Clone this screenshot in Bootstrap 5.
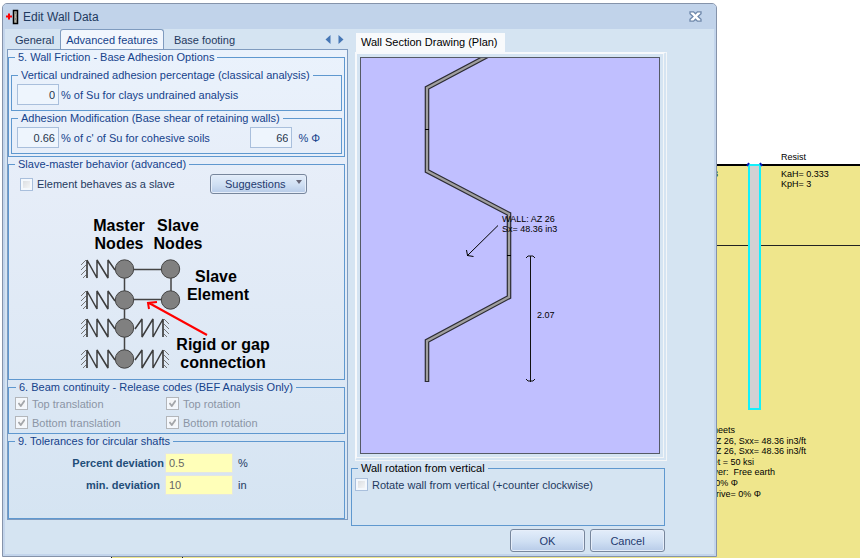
<!DOCTYPE html>
<html lang="en">
<head>
<meta charset="utf-8">
<meta name="viewport" content="width=device-width, initial-scale=1">
<title>Edit Wall Data</title>
<link href="https://cdn.jsdelivr.net/npm/bootstrap@5.3.0/dist/css/bootstrap.min.css" rel="stylesheet">
<style>
body{font:11px/14px "Liberation Sans",Arial,sans-serif;color:#1f3a5f;background:#fff}
.workspace{min-height:100vh;padding:3px 143px 1px 2px}
.model-view{position:absolute;inset:0;width:100%;height:100%;z-index:0}
.model-view text,.section-plan text{font-size:9px;fill:#000}
.dialog-window{z-index:1;border:1px solid #8593aa;border-radius:5px 5px 0 0;background:#d5e4f2;box-shadow:inset 0 0 0 2px #c3d5ec}
.title-bar{height:25px;padding:0 14px 0 3px;background:#c1d3ea;font-size:12px;border-radius:4px 4px 0 0}
.close-btn{width:13px;height:13px;line-height:0}
.dialog-main{padding:0 4px 3px}
.left-pane{flex:0 0 341px}
.tab-strip{height:20px}
.tab-strip .nav{padding-left:2px}
.tab-strip .nav-link{padding:3px 5px 2px;color:#1f3a5f;border:1px solid transparent;border-bottom:0;border-radius:3px 3px 0 0;line-height:14px}
.tab-strip .nav-link.active{background:#f1f6fd;border-color:#7f9bbf;color:#15428b;margin-bottom:-1px;height:20px}
.tab-scroll{padding-right:1px}
.tab-scroll button{line-height:0;width:13px;height:12px}
.tab-panel{padding-right:2px;border:1px solid #7f9bbf;background:linear-gradient(#eaf2fc,#e6edf8 30%,#d5e4f2)}
.group{border:1px solid #5f98cf;min-width:0;margin:0}
.group>legend{font-size:11px;line-height:14px;height:14px;margin:0 0 0 6px;padding:0 3px;color:#15428b}
.friction{padding:4px 2px 2px}
.friction>legend{margin-left:4px}
.friction .group{height:43px;padding:0 5px}
.friction .group>legend{margin-left:1px}
.box{font-size:11px;line-height:14px;width:42px;height:21px;padding:0 3px;border:1px solid #a9bfdc;border-radius:0;background:#eef5fd;color:#27364d;text-align:right}
.field-row{gap:2px;color:#15428b;padding-top:2px}
.check{gap:4px;min-height:0}
.check .form-check-input{float:none;flex:none;margin:0;width:13px;height:13px;border:1px solid #a9bfdc;border-radius:0;background:linear-gradient(135deg,#d5d8dc,#fafbfc);box-shadow:inset 0 0 0 2px #f4f8fd}
.check .form-check-input:checked{background:#f4f5f6 url("data:image/svg+xml,%3Csvg xmlns='http://www.w3.org/2000/svg' viewBox='0 0 11 11'%3E%3Cpath d='M2.5 5l2.3 3L8.7 2.5' fill='none' stroke='%23a3a6aa' stroke-width='1.8'/%3E%3C/svg%3E") center/11px no-repeat;border-color:#b3b6ba;opacity:1}
.check .form-check-input:disabled~.form-check-label{color:#8b95a5;opacity:1}
.slave{height:223px}
.slave-row{padding:3px 37px 0 11px}
.win-btn{font-size:11px;line-height:14px;height:23px;min-width:75px;padding:0 8px;color:#1f3a6f;border:1px solid #77869c;border-radius:3px;background:linear-gradient(#e3edfa,#cfdff3 55%,#b7cbe8);box-shadow:inset 0 0 0 1px #e6eefa}
.suggest{width:97px;height:20px;padding:0 4px 0 14px}
.suggest::after{border-width:4px 3px 0;border-top-color:#667;margin:0 0 4px}
.node-figure{width:200px;margin:20px 0 0 71px;display:block}
.node-figure text{font-weight:700;font-size:16px;text-anchor:middle;fill:#000}
.release{height:54px;padding:3px 6px}
.release-grid{grid-template-columns:151px 1fr;row-gap:5px}
.release>legend{margin-left:1px}
.tolerance{height:85px;padding-top:1px}
.tolerance .lbl{width:155px;font-weight:700;color:#1f4e79;text-align:right}
.tolerance .box{width:68px;height:20px;background:#ffffb9;border-color:#e3e6e4;color:#666;text-align:left}
.tolerance .tol-row{gap:1px;margin-bottom:2px;height:20px}
.tolerance .unit{padding-left:4px}
.right-pane{min-width:0;padding:4px 47px 0 3px}
.plan-tab{margin-left:5px}
.plan-tab .nav-link{padding:2px 7px 3px 5px;line-height:14px;color:#000;background:#f8fafc;border:0;border-radius:0}
.plan-frame{margin:0 -2px 0 4px;border:2px solid #f7f9fc;border-right:4px double #f3f5f7;border-bottom:4px double #f3f5f7;padding:3px}
.section-plan{display:block;width:100%;height:397px;border:1px solid #555a66;background:#c0bfff}
.rotation{height:65px;padding:3px}
.rotation>legend{color:#000;margin-left:3px}
.actions{gap:5px;padding-top:3px}
</style>
</head>
<body>
<main class="workspace position-relative d-flex flex-column">
<svg class="model-view" viewBox="0 0 860 558" preserveAspectRatio="xMaxYMax slice" role="img" aria-label="Wall model">
<rect x="111" y="165" width="749" height="393" fill="#efe68c"/>
<path d="M111 165H860" stroke="#000" stroke-width="2"/>
<path d="M700 245.500H860M111.500 245V558M182.500 245V558" stroke="#222"/>
<rect x="749" y="165" width="11" height="244" fill="#d1d1d3" stroke="#14f0fa" stroke-width="2"/>
<path d="M747 166l2-3M762 166l-2-3" stroke="#0018b8" stroke-width="2"/>
<text x="781" y="160">Resist</text>
<text x="781" y="177">KaH= 0.333</text>
<text x="781" y="187">KpH= 3</text>
<text x="718" y="177" text-anchor="end">0.333</text>
<g text-anchor="end">
<text x="735" y="433">Sheets</text>
<text x="806" y="444">AZ 26, Sxx= 48.36 in3/ft</text>
<text x="806" y="454">AZ 26, Sxx= 48.36 in3/ft</text>
<text x="754" y="465">et = 50 ksi</text>
<text x="775" y="475" xml:space="preserve">ver:  Free earth</text>
<text x="738" y="486">0% Φ</text>
<text x="761" y="497">Drive= 0% Φ</text>
</g>
</svg>
<section class="dialog-window position-relative d-flex flex-column flex-grow-1" role="dialog" aria-labelledby="dlgTitle">
<header class="title-bar d-flex align-items-center">
<svg width="13" height="16" viewBox="0 0 13 16" aria-hidden="true"><path d="M0 7.500H6M3 4.500V10.500" stroke="#f00" stroke-width="2"/><rect x="7.500" y="1.500" width="4" height="13" fill="#b6b5a6" stroke="#000" stroke-width="1.500"/><path d="M9 4h1M10 7h1M9 10h1M10 12h1" stroke="#666"/></svg>
<span id="dlgTitle" class="ms-1 me-auto">Edit Wall Data</span>
<button type="button" class="close-btn btn p-0 border-0" aria-label="Close"><svg width="13" height="11" viewBox="0 0 13 11"><path d="M1 .8h3.600l1.900 2 1.900-2H12v1.800L9 5.500l3 2.900v1.800H8.400l-1.900-2-1.900 2H1V8.400l3-2.900-3-2.900z" fill="#fff" stroke="#6d87aa" stroke-width="1.300"/></svg></button>
</header>
<div class="dialog-main d-flex flex-grow-1">
<div class="left-pane">
<div class="d-flex align-items-center tab-strip">
<ul class="nav flex-nowrap me-auto">
<li class="nav-item"><a class="nav-link" href="#general">General</a></li>
<li class="nav-item"><a class="nav-link active" aria-current="page" href="#advanced">Advanced features</a></li>
<li class="nav-item ms-1"><a class="nav-link" href="#footing">Base footing</a></li>
</ul>
<div class="tab-scroll d-flex">
<button type="button" class="btn p-0 border-0" aria-label="Previous tab"><svg width="6" height="9" viewBox="0 0 6 9"><path d="M5.500 0v9L.5 4.500z" fill="#4677b5"/></svg></button>
<button type="button" class="btn p-0 border-0" aria-label="Next tab"><svg width="6" height="9" viewBox="0 0 6 9"><path d="M.5 0v9l5-4.500z" fill="#4677b5"/></svg></button>
</div>
</div>
<form class="tab-panel" id="advanced">
<fieldset class="group friction">
<legend class="float-none w-auto">5. Wall Friction - Base Adhesion Options</legend>
<fieldset class="group">
<legend class="float-none w-auto">Vertical undrained adhesion percentage (classical analysis)</legend>
<div class="field-row d-flex align-items-center"><input class="box" id="su" value="0"><label for="su">% of Su for clays undrained analysis</label></div>
</fieldset>
<fieldset class="group">
<legend class="float-none w-auto">Adhesion Modification (Base shear of retaining walls)</legend>
<div class="field-row d-flex align-items-center"><input class="box" id="coh" value="0.66"><label for="coh" class="me-auto">% of c' of Su for cohesive soils</label><input class="box" id="phi" value="66"><label for="phi" class="ps-1 pe-3">% Φ</label></div>
</fieldset>
</fieldset>
<fieldset class="group slave">
<legend class="float-none w-auto">Slave-master behavior (advanced)</legend>
<div class="slave-row d-flex align-items-center justify-content-between">
<div class="check d-flex align-items-center"><input class="form-check-input" type="checkbox" id="slave"><label class="form-check-label" for="slave">Element behaves as a slave</label></div>
<button type="button" class="win-btn suggest btn dropdown-toggle d-flex align-items-center justify-content-between" data-bs-toggle="dropdown">Suggestions</button>
</div>
<svg class="node-figure" viewBox="80 214 200 160" role="img" aria-label="Master and slave nodes">
<defs>
<g id="spring"><path d="M7-9V9M6-9L1-4M6-4L1 1M6 1L1 6M6 6L3 9" stroke="#777" fill="none"/><path d="M7-9V9M7-9L17 9V-9L28 9V-9L35 1" stroke="#3c3c3c" stroke-width="1.500" fill="none" stroke-linejoin="bevel"/></g>
</defs>
<use href="#spring" x="80" y="269"/><use href="#spring" x="80" y="300"/><use href="#spring" x="80" y="328"/><use href="#spring" x="80" y="359"/>
<use href="#spring" transform="translate(170 328) scale(-1 1)"/><use href="#spring" transform="translate(170 359) scale(-1 1)"/>
<path d="M124.500 269V359M124 269.500H171V300M124 299.500H171" stroke="#444" stroke-width="1.500" fill="none"/>
<g fill="#808080" stroke="#444"><circle cx="124.500" cy="269" r="9.200"/><circle cx="124.500" cy="300" r="9.200"/><circle cx="124.500" cy="328" r="9.200"/><circle cx="124.500" cy="359" r="9.200"/><circle cx="170.500" cy="269" r="9.200"/><circle cx="170.500" cy="300" r="9.200"/></g>
<path d="M207 335L149 303M149 309L148 303L157 302" stroke="#f00" stroke-width="2" fill="none"/>
<text x="119" y="231">Master</text><text x="119" y="249">Nodes</text>
<text x="178" y="231">Slave</text><text x="178" y="249">Nodes</text>
<text x="216" y="282">Slave</text><text x="218" y="300">Element</text>
<text x="223" y="350">Rigid or gap</text><text x="223" y="368">connection</text>
</svg>
</fieldset>
<fieldset class="group release" disabled>
<legend class="float-none w-auto">6. Beam continuity - Release codes (BEF Analysis Only)</legend>
<div class="release-grid d-grid">
<div class="check d-flex"><input class="form-check-input" type="checkbox" id="tt" checked disabled><label class="form-check-label" for="tt">Top translation</label></div>
<div class="check d-flex"><input class="form-check-input" type="checkbox" id="tr" checked disabled><label class="form-check-label" for="tr">Top rotation</label></div>
<div class="check d-flex"><input class="form-check-input" type="checkbox" id="bt" checked disabled><label class="form-check-label" for="bt">Bottom translation</label></div>
<div class="check d-flex"><input class="form-check-input" type="checkbox" id="br" checked disabled><label class="form-check-label" for="br">Bottom rotation</label></div>
</div>
</fieldset>
<fieldset class="group tolerance">
<legend class="float-none w-auto">9. Tolerances for circular shafts</legend>
<div class="tol-row d-flex align-items-center mt-1"><label class="lbl" for="pd">Percent deviation</label><input class="box" id="pd" value="0.5"><span class="unit">%</span></div>
<div class="tol-row d-flex align-items-center"><label class="lbl pe-1" for="md">min. deviation</label><input class="box" id="md" value="10"><span class="unit">in</span></div>
</fieldset>
</form>
</div>
<div class="right-pane flex-grow-1 d-flex flex-column">
<ul class="nav plan-tab"><li class="nav-item"><a class="nav-link" href="#plan">Wall Section Drawing (Plan)</a></li></ul>
<div class="plan-frame" id="plan">
<svg class="section-plan" viewBox="361 58 298 395" role="img" aria-label="Wall section plan">
<path d="M490 54.500L427 88V171L509 214V297L427 341V382" fill="none" stroke="#2c2c34" stroke-width="4.600"/>
<path d="M490 54.500L427 88V171L509 214V297L427 341V381" fill="none" stroke="#a09f9f" stroke-width="2.200"/>
<path d="M425 129.500h4M507 255.500h4" stroke="#000"/>
<path d="M498 225.500L467 256M466.500 250l1 5.500 6 1" stroke="#000" fill="none"/>
<path d="M530.500 256V382M526 258l2-2h5l2 2M526 379l2 2h5l2-2" stroke="#111" fill="none"/>
<text x="502" y="222">WALL: AZ 26</text><text x="502" y="232">Sx= 48.36 in3</text><text x="537" y="318">2.07</text>
</svg>
</div>
<fieldset class="group rotation">
<legend class="float-none w-auto">Wall rotation from vertical</legend>
<div class="check d-flex"><input class="form-check-input" type="checkbox" id="rot"><label class="form-check-label" for="rot">Rotate wall from vertical (+counter clockwise)</label></div>
</fieldset>
<div class="actions d-flex justify-content-end"><button type="button" class="win-btn btn">OK</button><button type="button" class="win-btn btn">Cancel</button></div>
</div>
</div>
</section>
</main>
<script src="https://cdn.jsdelivr.net/npm/bootstrap@5.3.0/dist/js/bootstrap.bundle.min.js"></script>
</body>
</html>
